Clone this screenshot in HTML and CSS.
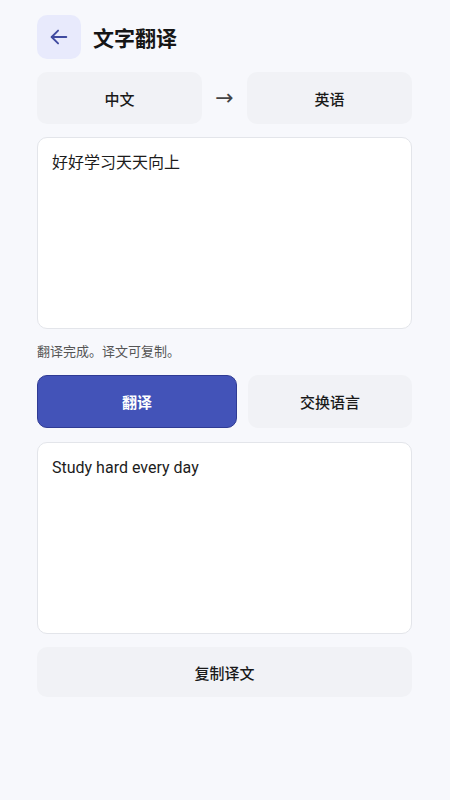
FILE: index.html
```html
<!DOCTYPE html>
<html lang="zh">
<head>
<meta charset="utf-8">
<link rel="stylesheet" href="styles.css">
</head>
<body>
<div class="page">
  <header class="header">
    <button class="back" aria-label="返回">
      <svg width="22" height="22" viewBox="0 0 24 24" fill="none" stroke="#3f4aa0" stroke-width="2" stroke-linecap="round" stroke-linejoin="round"><path d="M20 12H4"/><path d="M11 5l-7 7 7 7"/></svg>
    </button>
    <h1 class="title">文字翻译</h1>
  </header>
  <div class="langs">
    <div class="lang">中文</div>
    <div class="arrow">→</div>
    <div class="lang">英语</div>
  </div>
  <div class="box">好好学习天天向上</div>
  <div class="status">翻译完成。译文可复制。</div>
  <div class="actions">
    <button class="btn primary">翻译</button>
    <button class="btn secondary">交换语言</button>
  </div>
  <div class="box">Study hard every day</div>
  <button class="btn copy">复制译文</button>
</div>
</body>
</html>
```
FILE: styles.css
```css
* { box-sizing: border-box; }
html, body { margin: 0; padding: 0; background: #f7f8fc; }
body { font-family: Roboto, "Noto Sans CJK SC", sans-serif; color: #1a1a1a; }
.page { padding: 15px 38px 0 37px; display: flex; flex-direction: column; }
.header { display: flex; align-items: center; gap: 12px; height: 44px; }
.back { width: 44px; height: 44px; border: none; border-radius: 10px; background: #e8eafc; display: flex; align-items: center; justify-content: center; padding: 0; }
.title { margin: 0; font-size: 21px; font-weight: 700; color: #161616; }
.langs { display: flex; align-items: center; margin-top: 13px; gap: 0; }
.lang { flex: 1; height: 52px; background: #f1f2f6; border-radius: 10px; display: flex; align-items: center; justify-content: center; font-size: 15px; font-weight: 500; color: #1a1a1a; }
.arrow { width: 45px; text-align: center; font-size: 22px; color: #444; font-family: "DejaVu Sans", sans-serif; line-height: 1; }
.box { margin-top: 13px; height: 192px; background: #fff; border: 1px solid #e3e5ea; border-radius: 10px; padding: 14px 14px; font-size: 16px; line-height: 22px; color: #1c1c1c; }
.status { margin-top: 13px; font-size: 13px; line-height: 20px; color: #555; }
.actions { display: flex; gap: 11px; margin-top: 13px; }
.btn { height: 53px; border-radius: 10px; font-family: inherit; font-size: 15px; font-weight: 700; display: flex; align-items: center; justify-content: center; padding: 0; }
.primary { flex: 199; background: #4353b8; color: #fff; border: 1px solid #2f3b94; }
.secondary { flex: 165; background: #f1f2f6; color: #1a1a1a; border: none; font-weight: 500; }
.actions + .box { margin-top: 14px; }
.copy { margin-top: 13px; height: 50px; width: 100%; background: #f1f2f6; border: none; color: #1a1a1a; font-weight: 500; }
```
